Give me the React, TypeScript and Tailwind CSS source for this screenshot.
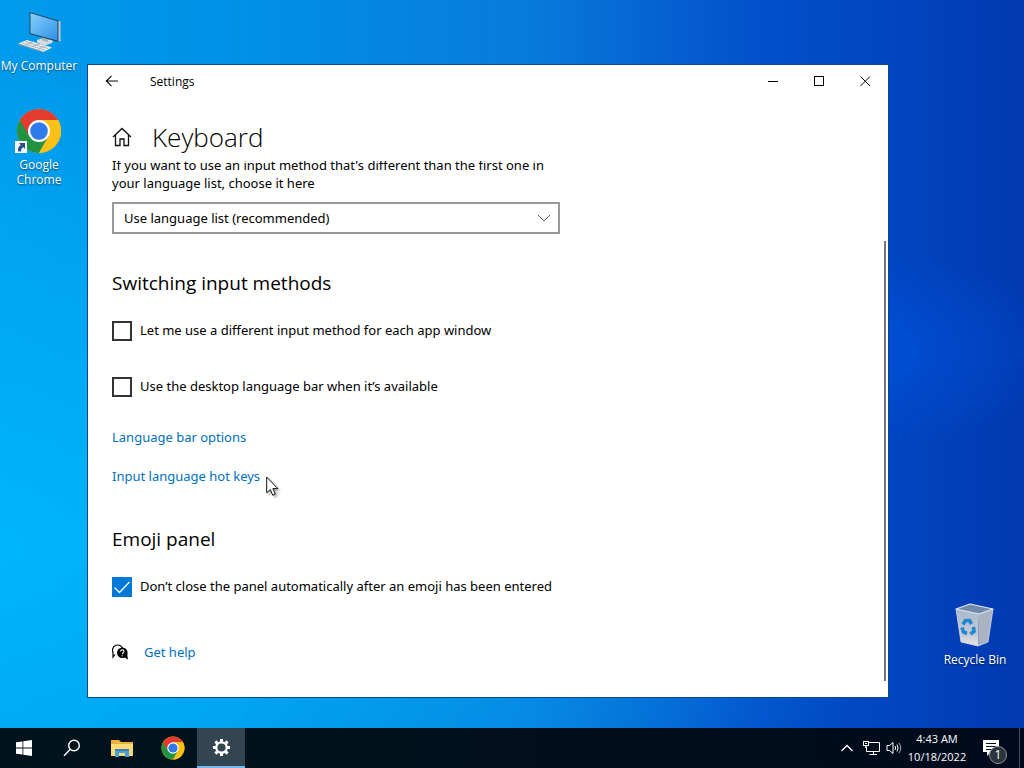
import React, { useState } from 'react';

interface IconProps {
  className?: string;
}

const ChromeIcon: React.FC<IconProps> = ({ className }) => (
  <svg viewBox="0 0 48 48" className={className} aria-hidden="true">
    <circle cx="24" cy="24" r="23" fill="#fbc116" />
    <path d="M24 24 L4.1 12.5 A23 23 0 0 0 24 47 L34 29.8 Z" fill="#229342" />
    <path d="M24 24 L14 29.8 L4.1 12.5 A23 23 0 0 1 43.9 12.5 H24 Z" fill="#e33b2e" />
    <path d="M24 12.5 H43.9 A23 23 0 0 1 24 47 L34 29.8 Z" fill="#fbc116" />
    <circle cx="24" cy="24" r="11.5" fill="#fff" />
    <circle cx="24" cy="24" r="9.2" fill="#3079ea" />
  </svg>
);

const ComputerIcon: React.FC<IconProps> = ({ className }) => (
  <svg viewBox="0 0 48 48" className={className} aria-hidden="true">
    <defs>
      <linearGradient id="screen" x1="0" y1="0" x2="1" y2="1">
        <stop offset="0" stopColor="#86cdfb" />
        <stop offset="0.55" stopColor="#55aef0" />
        <stop offset="1" stopColor="#2d8fe2" />
      </linearGradient>
    </defs>
    <path d="M22 34 L28 32 L38 34.500 L37 37 L30 39.500 L22 36.500 Z" fill="#d4dce2" />
    <path d="M27 30 L33 31.500 V36 L27 34.500 Z" fill="#a5b3bd" />
    <path d="M14.500 6 L43.500 14.500 L45 15 V35.500 L43.500 36 L14.500 28 Z" fill="#26465f" />
    <path d="M43.500 14.500 L45.500 15.500 V35 L43.500 36 Z" fill="#b7cad6" />
    <path d="M15.500 7.300 L42.500 15.200 V34.500 L15.500 27.200 Z" fill="url(#screen)" />
    <path d="M3 37.500 L12 34 L37 41.500 L28.500 46 Z" fill="#e9edf0" />
    <path d="M3 37.500 L28.500 45.500 V46.500 L3 38.500 Z" fill="#8d9aa3" />
    <path d="M7 37 L30 44 M10 35.500 L33 42.500 M10.500 39 L18.500 35.500 M17 41 L25 37.500 M23 43 L31 39.500" stroke="#9eabb4" strokeWidth="0.8" />
  </svg>
);

const RecycleBinIcon: React.FC<IconProps> = ({ className }) => (
  <svg viewBox="0 0 48 48" className={className} aria-hidden="true">
    <defs>
      <linearGradient id="bin" x1="0" y1="0" x2="0" y2="1">
        <stop offset="0" stopColor="#aab9cc" />
        <stop offset="0.7" stopColor="#c3cad4" />
        <stop offset="1" stopColor="#ece8e4" />
      </linearGradient>
    </defs>
    <path d="M5 9 L28 14 L27 46 L10 42 Z" fill="url(#bin)" />
    <path d="M28 14 L42 9 L37 42 L27 46 Z" fill="#a9b3c2" />
    <path d="M5 9 L19 4 L42 9 L28 14 Z" fill="#7389aa" stroke="#e2e8ef" strokeWidth="1.2" strokeLinejoin="round" />
    <path d="M5 9 L10 42 L27 46 L37 42 L42 9" fill="none" stroke="#d6dde6" strokeWidth="0.8" />
    <g fill="none" stroke="#1f86d2" strokeWidth="3.6">
      <path d="M12 24.500 L14.500 20.500 L18.500 20.500 L20.500 24" />
      <path d="M22.500 27 L23 31.500 L19.500 34" />
      <path d="M16 33.500 L12.500 32 L11 27.500" />
    </g>
  </svg>
);

const FolderIcon: React.FC<IconProps> = ({ className }) => (
  <svg viewBox="0 0 22 19" className={className} aria-hidden="true">
    <path d="M0 1 H8 L10 3 H22 V17 H0 Z" fill="#eeb03a" />
    <path d="M0 5 H22 V17 H0 Z" fill="#fddc75" />
    <path d="M4 18 V10 H18 V18 H14 V14 H8 V18 Z" fill="#4a9fd8" />
    <path d="M4 10 H18 V12 H4 Z" fill="#3581b4" />
  </svg>
);

const SettingsGearIcon: React.FC<IconProps> = ({ className }) => (
  <svg viewBox="0 0 20 20" className={className} aria-hidden="true">
    <circle cx="10" cy="10" r="5.500" fill="none" stroke="#fff" strokeWidth="2.400" />
    <g stroke="#fff" strokeWidth="3.200">
      <path d="M10 1 V4.500 M10 15.500 V19 M1 10 H4.500 M15.500 10 H19" />
      <path d="M3.600 3.600 L6 6 M14 14 L16.400 16.400 M16.400 3.600 L14 6 M6 14 L3.600 16.400" />
    </g>
  </svg>
);

interface DesktopShortcutProps {
  label: string;
  className: string;
  children: React.ReactNode;
}

const DesktopShortcut: React.FC<DesktopShortcutProps> = ({ label, className, children }) => (
  <button type="button" className={`absolute flex w-[78px] flex-col items-center text-center text-[12px] leading-[15px] text-white ${className}`}>
    {children}
    <span className="[text-shadow:0_1px_2px_rgba(0,0,0,0.6)]">{label}</span>
  </button>
);

interface SettingCheckboxProps {
  label: string;
  checked: boolean;
  onChange: (checked: boolean) => void;
}

const SettingCheckbox: React.FC<SettingCheckboxProps> = ({ label, checked, onChange }) => (
  <label className="flex h-5 w-fit items-start gap-2">
    <span className="grid h-5 w-5 shrink-0">
      <input
        type="checkbox"
        checked={checked}
        onChange={e => onChange(e.target.checked)}
        className="col-start-1 row-start-1 h-5 w-5 appearance-none border-2 border-[#333] bg-white checked:border-[#0078d7] checked:bg-[#0078d7]"
      />
      {checked && (
        <svg viewBox="0 0 20 20" className="pointer-events-none col-start-1 row-start-1 h-5 w-5">
          <path d="M2.500 10.500 L7.500 15.500 L17.500 5" fill="none" stroke="#fff" strokeWidth="1.300" />
        </svg>
      )}
    </span>
    <span>{label}</span>
  </label>
);

const SettingsWindow: React.FC = () => {
  const [perWindow, setPerWindow] = useState(false);
  const [languageBar, setLanguageBar] = useState(false);
  const [keepEmojiOpen, setKeepEmojiOpen] = useState(true);

  return (
    <section className="absolute left-[87px] top-[64px] flex h-[634px] w-[802px] flex-col border border-[#0b4a86] bg-white text-black">
      <header className="flex h-8 shrink-0 items-center pl-3">
        <button type="button" aria-label="Back" className="flex h-8 w-6 items-center justify-center">
          <svg viewBox="0 0 14 14" className="h-3.5 w-3.5" fill="none" stroke="#111" strokeWidth="1.200">
            <path d="M13 7 H1.500 M6.500 1.800 L1.300 7 L6.500 12.200" />
          </svg>
        </button>
        <span className="ml-[26px] grow pt-0.5 text-[12px]">Settings</span>
        <button type="button" aria-label="Minimize" className="flex h-8 w-[46px] items-center justify-center">
          <svg viewBox="0 0 11 11" className="h-[11px] w-[11px]" fill="none" stroke="#000">
            <path d="M0 5.500 H10" />
          </svg>
        </button>
        <button type="button" aria-label="Maximize" className="flex h-8 w-[46px] items-center justify-center">
          <svg viewBox="0 0 11 11" className="h-[11px] w-[11px]" fill="none" stroke="#000">
            <rect x="0.500" y="0.500" width="9" height="9" />
          </svg>
        </button>
        <button type="button" aria-label="Close" className="flex h-8 w-[46px] items-center justify-center">
          <svg viewBox="0 0 11 11" className="h-[11px] w-[11px]" fill="none" stroke="#000">
            <path d="M0.500 0.500 L10 10 M10 0.500 L0.500 10" />
          </svg>
        </button>
      </header>

      <div className="flex h-16 shrink-0 items-end gap-5 pl-6">
        <svg viewBox="0 0 20 20" className="mb-3.5 h-5 w-5" fill="none" stroke="#111" strokeWidth="1.300">
          <path d="M1 10 L10 1.500 L19 10 M3.500 8 V18.500 H8 V12 H12 V18.500 H16.500 V8" />
        </svg>
        <h1 className="mb-1.5 text-[26px] font-light leading-9">Keyboard</h1>
      </div>

      <div className="flex min-h-0 grow">
        <main className="min-w-0 grow overflow-hidden pl-6 font-['Noto_Sans',sans-serif] text-[13px] leading-[18px]">
          <label htmlFor="input-method" className="-mt-[5px] block w-[448px]">
            If you want to use an input method that's different than the first one in your language list, choose it here
          </label>
          <div className="mt-2.5 grid w-[448px]">
            <select id="input-method" className="col-start-1 row-start-1 h-8 appearance-none border-2 border-[#999] bg-white px-2.5">
              <option>Use language list (recommended)</option>
            </select>
            <svg viewBox="0 0 14 14" className="pointer-events-none col-start-1 row-start-1 mr-[9px] h-3.5 w-3.5 place-self-center justify-self-end" fill="none" stroke="#555">
              <path d="M1 4 L7 10 L13 4" />
            </svg>
          </div>

          <h2 className="mt-[35px] font-['Open_Sans',sans-serif] text-[19px] leading-7">Switching input methods</h2>
          <div className="mt-6 flex flex-col gap-9">
            <SettingCheckbox label="Let me use a different input method for each app window" checked={perWindow} onChange={setPerWindow} />
            <SettingCheckbox label="Use the desktop language bar when it’s available" checked={languageBar} onChange={setLanguageBar} />
          </div>
          <nav className="mt-[31px] flex flex-col items-start gap-[21px] text-[#0070bb]">
            <a href="#language-bar">Language bar options</a>
            <a href="#hot-keys">Input language hot keys</a>
          </nav>

          <h2 className="mt-10 font-['Open_Sans',sans-serif] text-[19px] leading-7">Emoji panel</h2>
          <div className="mt-6">
            <SettingCheckbox label="Don’t close the panel automatically after an emoji has been entered" checked={keepEmojiOpen} onChange={setKeepEmojiOpen} />
          </div>

          <div className="mt-[46px] flex items-center gap-4">
            <svg viewBox="0 0 16 16" className="h-4 w-4">
              <path d="M3 10.500 L1 13 V8.500 A5 5 0 1 1 10.500 4" fill="none" stroke="#000" strokeWidth="1.200" />
              <circle cx="10.300" cy="8.800" r="5.300" fill="#000" />
              <path d="M12 13 L16 15.500 L15 9 Z" fill="#000" />
              <path d="M8.500 7.600 C8.500 5.300 12 5.300 12 7.500 C12 8.800 10.300 8.800 10.300 10.300 M10.300 11.300 V12.300" fill="none" stroke="#fff" strokeWidth="1.100" />
            </svg>
            <a href="#help" className="text-[#0070bb]">Get help</a>
          </div>
        </main>
        <div className="flex w-1 shrink-0 flex-col pb-4 pt-20">
          <div className="w-0.5 grow bg-[#767676]" />
        </div>
      </div>
    </section>
  );
};

const Taskbar: React.FC = () => (
  <footer className="flex h-10 shrink-0 items-stretch bg-gradient-to-r from-[#00141d] via-[#000f1b] to-[#000a1c] text-white">
    <button type="button" aria-label="Start" className="flex w-12 items-center justify-center">
      <svg viewBox="0 0 16 16" className="h-4 w-4" fill="#fff">
        <path d="M0 2.300 L6.500 1.400 V7.600 H0 Z M7.300 1.300 L16 0 V7.600 H7.300 Z M0 8.400 H6.500 V14.600 L0 13.700 Z M7.300 8.400 H16 V16 L7.300 14.700 Z" />
      </svg>
    </button>
    <button type="button" aria-label="Search" className="flex w-12 items-center justify-center">
      <svg viewBox="0 0 18 18" className="h-[18px] w-[18px]" fill="none" stroke="#fff" strokeWidth="1.400">
        <circle cx="11" cy="6.500" r="5.300" />
        <path d="M7.300 10.300 L1 16.700" />
      </svg>
    </button>
    <button type="button" aria-label="File Explorer" className="flex w-[52px] items-center justify-center">
      <FolderIcon className="h-[19px] w-[22px]" />
    </button>
    <button type="button" aria-label="Google Chrome" className="flex w-[49px] items-center justify-center">
      <ChromeIcon className="h-6 w-6" />
    </button>
    <button type="button" aria-label="Settings" className="flex w-12 items-center justify-center border-b-2 border-[#76b9ed] bg-[#334550]">
      <SettingsGearIcon className="h-[19px] w-[19px]" />
    </button>

    <div className="ml-auto flex items-center">
      <button type="button" aria-label="Show hidden icons" className="flex w-6 justify-center">
        <svg viewBox="0 0 14 14" className="h-3.5 w-3.5" fill="none" stroke="#fff" strokeWidth="1.300">
          <path d="M1.500 10 L7 4.500 L12.500 10" />
        </svg>
      </button>
      <button type="button" aria-label="Network" className="flex w-6 justify-center">
        <svg viewBox="0 0 17 14" className="h-3.5 w-[17px]" fill="none" stroke="#fff">
          <path d="M5.500 1.500 H16.500 V10.500 H3.500 V5.500 M10.500 10.500 V13.500 M6.500 13.500 H14" />
          <rect x="0.500" y="0.500" width="5" height="4" />
          <path d="M2.500 4.500 V6.500 H3.500 M2 2.500 H4" />
        </svg>
      </button>
      <button type="button" aria-label="Volume" className="flex w-[22px] justify-center">
        <svg viewBox="0 0 16 14" className="h-3.5 w-4" fill="none" stroke="#fff">
          <path d="M1 4.500 H3.500 L7 1.500 V12.500 L3.500 9.500 H1 Z" />
          <path d="M9 5 Q10.300 7 9 9 M11 3.500 Q13.200 7 11 10.500" />
          <path d="M13 2 Q16.500 7 13 12" stroke="#a5adb5" />
        </svg>
      </button>
      <div className="w-16 text-center text-[11px] leading-[18px]">
        <div>4:43 AM</div>
        <div>10/18/2022</div>
      </div>
      <button type="button" aria-label="1 new notification" className="relative flex h-10 w-[50px] items-center pl-3.5">
        <svg viewBox="0 0 16 16" className="h-4 w-4">
          <path d="M0 0 H16 V12 H8 L4 16 V12 H0 Z" fill="#fff" />
          <path d="M3 3.500 H13 M3 6.500 H13 M3 9.500 H10" stroke="#000f1b" />
        </svg>
        <span className="absolute left-5 top-[18px] flex h-[18px] w-[18px] items-center justify-center rounded-full border border-[#8b939a] bg-[#2b333b] text-[12px]">1</span>
      </button>
      <button type="button" aria-label="Show desktop" className="h-10 w-[5px] border-l border-[#4a525b]" />
    </div>
  </footer>
);

const App: React.FC = () => (
  <div className="flex h-screen min-h-[640px] cursor-default flex-col overflow-hidden font-['Open_Sans',sans-serif]">
    <div className="relative min-h-0 grow bg-[linear-gradient(90deg,#009bec_0%,#0092e6_22%,#087adb_52%,#0350cc_74%,#0144c0_88%,#0139b0_100%)]">
      <div className="absolute inset-0 bg-[radial-gradient(ellipse_at_0%_75%,rgba(0,190,255,0.75),transparent_62%),radial-gradient(ellipse_at_84%_48%,rgba(0,90,235,0.5),transparent_18%)]" />
      <DesktopShortcut label="My Computer" className="left-0 top-[6px]">
        <ComputerIcon className="mb-1 h-12 w-12" />
      </DesktopShortcut>
      <DesktopShortcut label="Google Chrome" className="left-0 top-[107px]">
        <span className="relative mb-0.5 flex h-12 w-12 justify-center">
          <ChromeIcon className="h-12 w-[46px]" />
          <svg viewBox="0 0 12 12" className="absolute bottom-0.5 left-0 h-3 w-3">
            <rect width="12" height="12" fill="#f4f7fa" />
            <path d="M4 2 H10 V8 L8.300 6.300 C6.500 7.300 6 8.500 6.200 10.500 H3.300 C2.500 7.500 3.500 5.500 5.800 3.900 Z" fill="#2d4f87" />
          </svg>
        </span>
      </DesktopShortcut>
      <DesktopShortcut label="Recycle Bin" className="right-[10px] top-[600px]">
        <RecycleBinIcon className="mb-1 h-12 w-12" />
      </DesktopShortcut>
      <SettingsWindow />
      <svg viewBox="0 0 14 21" className="pointer-events-none absolute left-[266px] top-[476px] h-[21px] w-3.5 drop-shadow-[2px_2px_1px_rgba(0,0,0,0.3)]">
        <path d="M0.700 1 V16.800 L4.300 13.500 L6.800 19.300 L9.300 18.200 L6.900 12.600 H11.800 Z" fill="#fff" stroke="#111" />
      </svg>
    </div>
    <Taskbar />
  </div>
);

export default App;
